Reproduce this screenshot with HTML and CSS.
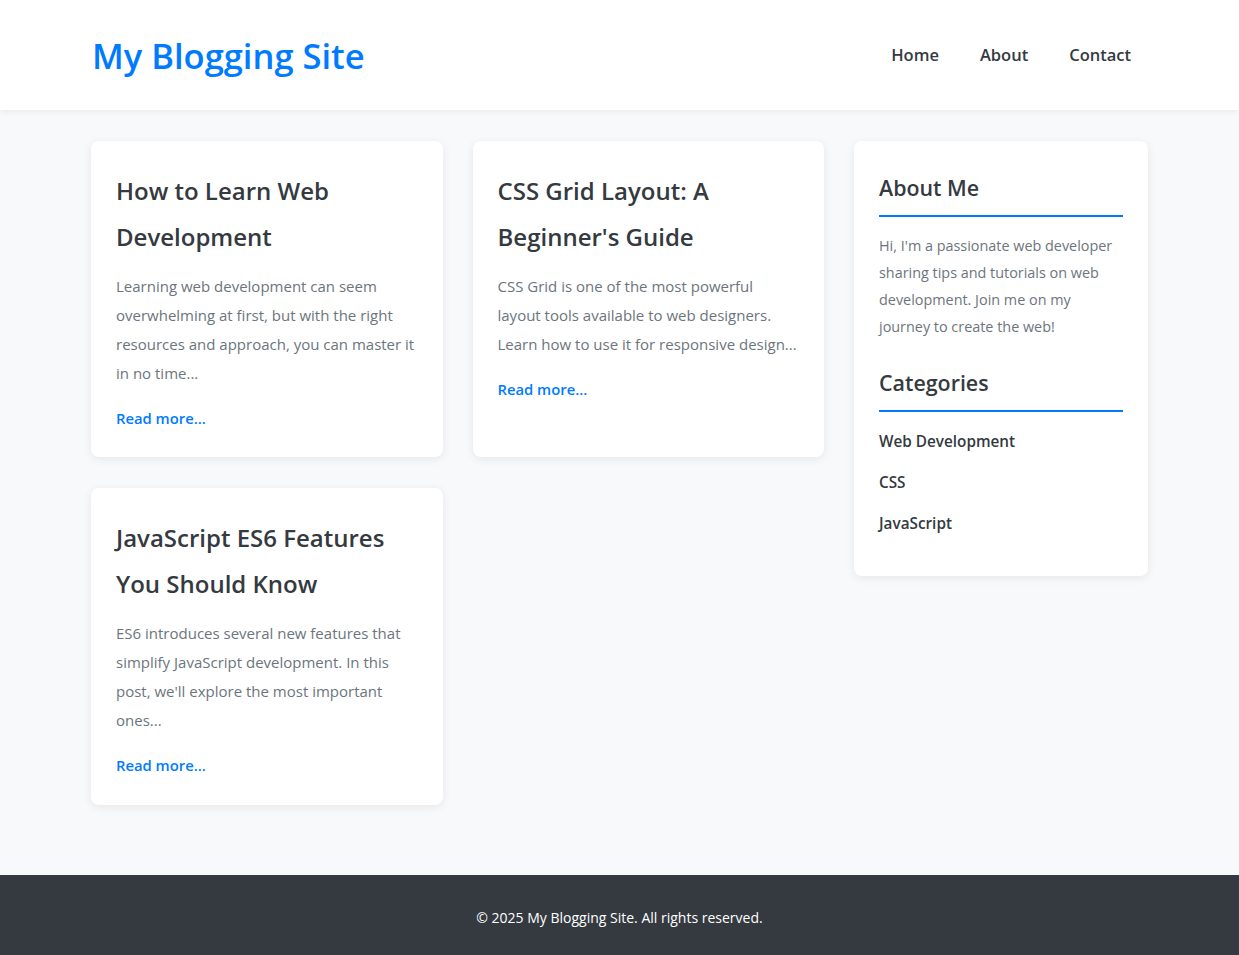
FILE: index.html
```html
<!DOCTYPE html>
<html lang="en">
<head>
<meta charset="UTF-8">
<title>My Blogging Site</title>
<link rel="stylesheet" href="styles.css">
</head>
<body>
<header class="site-header">
  <div class="container header-inner">
    <h1 class="logo">My Blogging Site</h1>
    <nav class="nav">
      <a href="#">Home</a>
      <a href="#">About</a>
      <a href="#">Contact</a>
    </nav>
  </div>
</header>

<main class="container layout">
  <section class="posts">
    <article class="card post">
      <h2>How to Learn Web Development</h2>
      <p>Learning web development can seem overwhelming at first, but with the right resources and approach, you can master it in no time...</p>
      <a href="#" class="read-more">Read more...</a>
    </article>
    <article class="card post">
      <h2>CSS Grid Layout: A Beginner's Guide</h2>
      <p>CSS Grid is one of the most powerful layout tools available to web designers. Learn how to use it for responsive design...</p>
      <a href="#" class="read-more">Read more...</a>
    </article>
    <article class="card post">
      <h2>JavaScript ES6 Features You Should Know</h2>
      <p>ES6 introduces several new features that simplify JavaScript development. In this post, we'll explore the most important ones...</p>
      <a href="#" class="read-more">Read more...</a>
    </article>
  </section>

  <aside class="card sidebar">
    <div class="widget">
      <h3>About Me</h3>
      <p>Hi, I'm a passionate web developer sharing tips and tutorials on web development. Join me on my journey to create the web!</p>
    </div>
    <div class="widget">
      <h3>Categories</h3>
      <ul class="cat-list">
        <li><a href="#">Web Development</a></li>
        <li><a href="#">CSS</a></li>
        <li><a href="#">JavaScript</a></li>
      </ul>
    </div>
  </aside>
</main>

<footer class="site-footer">
  <p>&copy; 2025 My Blogging Site. All rights reserved.</p>
</footer>
</body>
</html>
```

FILE: styles.css
```css
* { box-sizing: border-box; }

body {
  margin: 0;
  font-family: "Segoe UI", "Open Sans", sans-serif;
  line-height: 1.8;
  color: #343a40;
  background: #f8f9fa;
}

a { text-decoration: none; }

.container {
  width: 1057px;
  margin: 0 auto;
}

.site-header {
  background: #fff;
  box-shadow: 0 2px 6px rgba(0,0,0,0.06);
  height: 110px;
}

.header-inner {
  height: 100%;
  display: flex;
  align-items: center;
  justify-content: space-between;
}

.logo {
  margin: 2px 0 0 1px;
  font-size: 34.5px;
  font-weight: 600;
  color: #007bff;
  line-height: 1.2;
}

.nav {
  display: flex;
  gap: 7px;
}

.nav a {
  color: #343a40;
  font-size: 16.5px;
  font-weight: 600;
  padding: 8px 17px;
}

.layout {
  display: grid;
  grid-template-columns: 1fr 294px;
  gap: 30px;
  align-items: start;
  padding: 31px 0 70px;
}

.posts {
  display: grid;
  grid-template-columns: 1fr 1fr;
  column-gap: 30px;
  row-gap: 31px;
}

.card {
  background: #fff;
  border-radius: 8px;
  box-shadow: 0 2px 10px rgba(0,0,0,0.08);
  padding: 27px 25px 24px;
}

.post h2 {
  margin: 0 0 12px;
  font-size: 24px;
  font-weight: 600;
  line-height: 46px;
  color: #343a40;
}

.posts .post:nth-child(3) { padding-bottom: 25px; }

.post p {
  margin: 0 0 16px;
  font-size: 15px;
  line-height: 29px;
  color: #6c757d;
}

.read-more {
  color: #007bff;
  font-weight: 600;
  font-size: 14.8px;
  line-height: 29px;
  display: inline-block;
}

.widget + .widget { margin-top: 23px; }

.sidebar {
  padding-bottom: 25px;
}

.sidebar h3 {
  margin: 0 0 15px;
  font-size: 21.4px;
  font-weight: 600;
  line-height: 40px;
  padding-bottom: 7px;
  border-bottom: 2px solid #007bff;
}

.sidebar p {
  margin: 0;
  font-size: 14.4px;
  line-height: 27px;
  color: #6c757d;
}

.cat-list {
  list-style: none;
  margin: 0;
  padding: 0;
}

.cat-list li {
  margin-bottom: 14px;
  font-size: 15.3px;
  line-height: 27px;
}

.cat-list li:first-child { margin-top: 16px; }

.cat-list a {
  color: #343a40;
  font-weight: 600;
}

.site-footer {
  background: #343a40;
  color: #fff;
  text-align: center;
  height: 80px;
  padding-top: 30px;
}

.site-footer p {
  margin: 0;
  font-size: 14px;
  line-height: 25px;
}
```
